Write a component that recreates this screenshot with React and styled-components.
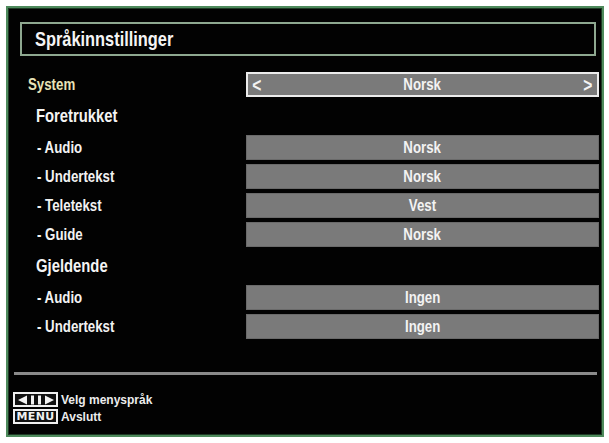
import React from "react";
import styled, { createGlobalStyle, css } from "styled-components";

const GlobalStyle = createGlobalStyle`
  html, body {
    margin: 0;
    background: #ffffff;
  }
  body {
    font-family: "Liberation Sans", Arial, sans-serif;
  }
`;

// the OSD font is a narrow one; squeeze Liberation Sans to match it
const narrow = (origin) => css`
  display: inline-block;
  font-weight: 700;
  transform: scaleX(0.78);
  transform-origin: ${origin};
  white-space: nowrap;
`;

const preferred = [
  { label: "Audio", value: "Norsk" },
  { label: "Undertekst", value: "Norsk" },
  { label: "Teletekst", value: "Vest" },
  { label: "Guide", value: "Norsk" },
];

const current = [
  { label: "Audio", value: "Ingen" },
  { label: "Undertekst", value: "Ingen" },
];

function App() {
  return (
    <>
      <GlobalStyle />
      <Frame>
        <TitleBox>
          <Title>Språkinnstillinger</Title>
        </TitleBox>
        <Menu>
          <Row>
            <SystemLabel>System</SystemLabel>
            <ValueBox selected>
              <Arrow>&lt;</Arrow>
              <Value>Norsk</Value>
              <Arrow>&gt;</Arrow>
            </ValueBox>
          </Row>
          <Heading>
            <HeadingText>Foretrukket</HeadingText>
          </Heading>
          {preferred.map((item) => (
            <Row key={"p" + item.label}>
              <ItemLabel>- {item.label}</ItemLabel>
              <ValueBox>
                <Value>{item.value}</Value>
              </ValueBox>
            </Row>
          ))}
          <Heading>
            <HeadingText>Gjeldende</HeadingText>
          </Heading>
          {current.map((item) => (
            <Row key={"c" + item.label}>
              <ItemLabel>- {item.label}</ItemLabel>
              <ValueBox>
                <Value>{item.value}</Value>
              </ValueBox>
            </Row>
          ))}
        </Menu>
        <Divider />
        <Footer>
          <Hint>
            <KeyIcon>
              <svg width="40" height="10" viewBox="0 0 40 10">
                <polygon points="2,5 11,0.5 11,9.5" fill="#f2f2f2" />
                <rect x="15" y="0.5" width="3" height="9" fill="#f2f2f2" />
                <rect x="22" y="0.5" width="3" height="9" fill="#f2f2f2" />
                <polygon points="38,5 29,0.5 29,9.5" fill="#f2f2f2" />
              </svg>
            </KeyIcon>
            <HintText>Velg menyspråk</HintText>
          </Hint>
          <Hint>
            <KeyIcon>
              <KeyText>MENU</KeyText>
            </KeyIcon>
            <HintText>Avslutt</HintText>
          </Hint>
        </Footer>
      </Frame>
    </>
  );
}

const Frame = styled.div`
  margin: 6px 0 0 6px;
  width: 598px;
  height: 431px;
  box-sizing: border-box;
  background: #020202;
  border: 2px solid #4e8a5c;
  box-shadow: inset 0 0 0 1px #1d3a24;
  padding: 14px 5px 0 12px;
  display: flex;
  flex-direction: column;
`;

const TitleBox = styled.div`
  width: 576px;
  height: 34px;
  box-sizing: border-box;
  border: 2px solid #8ea890;
  display: flex;
  align-items: center;
  padding-left: 13px;
`;

const Title = styled.span`
  ${narrow("left center")}
  color: #f4f4f4;
  font-size: 21px;
`;

const Menu = styled.div`
  margin-top: 16px;
  display: flex;
  flex-direction: column;
  gap: 4px;
`;

const Row = styled.div`
  display: grid;
  grid-template-columns: 226px 353px;
  height: 25px;
  align-items: center;
  justify-items: start;
`;

const SystemLabel = styled.span`
  ${narrow("left center")}
  color: #e8e3b8;
  font-size: 17px;
  margin-left: 8px;
`;

const ItemLabel = styled.span`
  ${narrow("left center")}
  color: #f2f2f2;
  font-size: 17px;
  margin-left: 17px;
`;

const Heading = styled.div`
  height: 30px;
  display: flex;
  align-items: center;
  padding-left: 16px;
`;

const HeadingText = styled.span`
  ${narrow("left center")}
  color: #f4f4f4;
  font-size: 19px;
`;

const ValueBox = styled.div`
  width: 100%;
  height: 25px;
  box-sizing: border-box;
  background: #7a7a7a;
  border: ${(p) => (p.selected ? "2px solid #ececec" : "1px solid #6a6a6a")};
  display: flex;
  align-items: center;
  justify-content: ${(p) => (p.selected ? "space-between" : "center")};
  padding: 0 3px;
`;

const Value = styled.span`
  ${narrow("center")}
  color: #f3f3f3;
  font-size: 17px;
`;

const Arrow = styled.span`
  ${narrow("center")}
  color: #f3f3f3;
  font-size: 20px;
  line-height: 1;
`;

const Divider = styled.div`
  margin-top: 33px;
  margin-left: -6px;
  width: 583px;
  height: 3px;
  background: #8a8a8a;
`;

const Footer = styled.div`
  margin-top: 17px;
  margin-left: -7px;
  display: flex;
  flex-direction: column;
  gap: 2px;
`;

const Hint = styled.div`
  display: flex;
  align-items: center;
  gap: 3px;
`;

const KeyIcon = styled.div`
  width: 45px;
  height: 15px;
  box-sizing: border-box;
  border: 2px solid #f0f0f0;
  background: #111;
  display: flex;
  align-items: center;
  justify-content: center;
`;

const KeyText = styled.span`
  color: #f0f0f0;
  font-size: 11px;
  font-weight: 700;
  font-family: "DejaVu Sans", sans-serif;
  letter-spacing: 0.3px;
  line-height: 1;
`;

const HintText = styled.span`
  color: #ececec;
  font-size: 12px;
  font-weight: 700;
`;

export default App;
